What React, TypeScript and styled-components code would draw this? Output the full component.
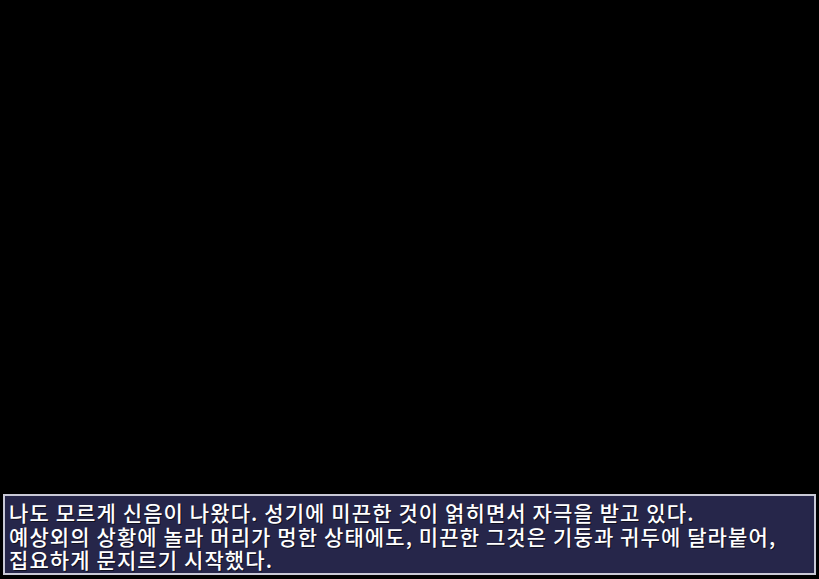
import React from 'react';
import styled, { createGlobalStyle } from 'styled-components';

const lines = [
  '나도 모르게 신음이 나왔다. 성기에 미끈한 것이 얽히면서 자극을 받고 있다.',
  '예상외의 상황에 놀라 머리가 멍한 상태에도, 미끈한 그것은 기둥과 귀두에 달라붙어,',
  '집요하게 문지르기 시작했다.',
];

const GlobalStyle = createGlobalStyle`
  html, body {
    margin: 0;
    padding: 0;
    background: #000;
  }
`;

const SScreen = styled.div`
  width: 819px;
  height: 579px;
  display: flex;
  flex-direction: column;
  justify-content: flex-end;
  background: #000;
  overflow: hidden;
`;

const SMessageWindow = styled.div`
  box-sizing: border-box;
  margin: 0 3px 4px 3px;
  height: 81px;
  padding: 5px 0 0 4px;
  background: #26264a;
  border: 2px solid #c9c9d6;
  display: flex;
  flex-direction: column;
`;

const SLine = styled.div`
  font-family: 'Noto Sans CJK KR', 'Noto Sans', sans-serif;
  font-size: 21px;
  font-weight: 500;
  line-height: 23.5px;
  letter-spacing: 1.1px;
  color: #ffffff;
  white-space: nowrap;
  text-shadow: 1px 1px 0 rgba(0, 0, 0, 0.6);
`;

function App() {
  return (
    <>
      <GlobalStyle />
      <SScreen>
        <SMessageWindow>
          {lines.map((line) => (
            <SLine key={line}>{line}</SLine>
          ))}
        </SMessageWindow>
      </SScreen>
    </>
  );
}

export default App;
